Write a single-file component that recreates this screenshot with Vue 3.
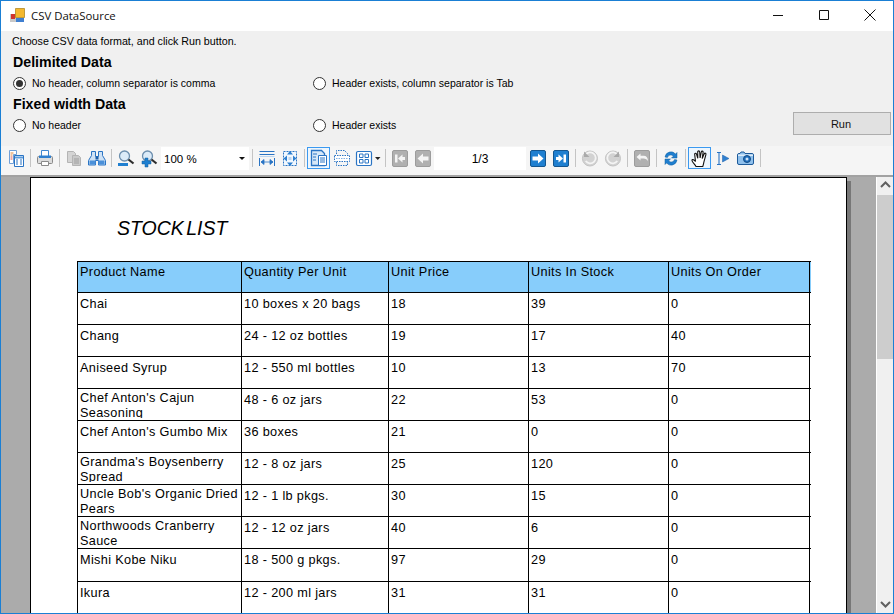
<script setup>
const B = '#2a74c4'
const LB = '#dcebf8'
const G = '#b4b4b4'

const square = 'M3 1.500h12A1.500 1.500 0 0 1 16.500 3v13a1.500 1.500 0 0 1-1.500 1.500H3A1.500 1.500 0 0 1 1.500 16V3A1.500 1.500 0 0 1 3 1.500z'
const grayBtn = (inner) => [{ d: square, fill: '#b0b0b0', stroke: '#9c9c9c' }, ...inner]
const blueBtn = (inner) => [{ d: square, fill: '#1f7fd0', stroke: '#14568f' }, ...inner]
const W = '#f4f4f4'

const tools = [
  { k: 'b', s: [
    { d: 'M2.500 1.500h7v4h-3v9h-4z', fill: '#fff', stroke: '#6f9fd8' },
    { d: 'M3.500 4h3M3.500 6h2', stroke: '#e0843a' },
    { d: 'M3.500 8h2M3.500 10h2', stroke: '#d9534f' },
    { d: 'M7.500 6.500h9v11h-9z', fill: '#fff', stroke: B },
    { d: 'M8 7.500h8v2H8z', fill: '#5b9bdc' },
    { d: 'M9 11h2M9 13h2M9 15h2M13 11h2M13 13h2M13 15h2', stroke: B }
  ] },
  { k: 's' },
  { k: 'b', s: [
    { d: 'M5.500 1.500h7v6h-7z', fill: '#fff', stroke: '#3f87d0' },
    { d: 'M2.500 7.500h13a1 1 0 0 1 1 1v5a1 1 0 0 1-1 1h-13a1 1 0 0 1-1-1v-5a1 1 0 0 1 1-1z', fill: '#dcdcdc', stroke: '#8a8a8a' },
    { d: 'M3 6.500h12v2.500H3z', fill: '#2f80d0' },
    { d: 'M5.500 12.500h7v4h-7z', fill: '#fff', stroke: '#8a8a8a' }
  ] },
  { k: 's' },
  { k: 'b', s: [
    { d: 'M2.500 2.500h6l2 2v9h-8z', fill: '#d4d4d4', stroke: G },
    { d: 'M7.500 6.500h6l2 2v8h-8z', fill: '#c9c9c9', stroke: G },
    { d: 'M9 10h5M9 12h5M9 14h5', stroke: '#9f9f9f' }
  ] },
  { k: 'b', s: [
    { d: 'M3.500 2.500h4v5h3v-5h4v4l3 5v4.500h-7v-4.500h-3v4.500h-7v-4.500l3-5z', fill: '#cfe2f5', stroke: B },
    { d: 'M1.500 11.500h6v4h-6zM10.500 11.500h6v4h-6z', fill: '#4a90d9' },
    { d: 'M7.500 7.500h3v3h-3z', fill: '#1d5fa8' }
  ] },
  { k: 's' },
  { k: 'b', s: [
    { d: 'M7.500 2a5 5 0 1 1 0 10a5 5 0 1 1 0-10z', fill: LB, stroke: '#6d8fae', sw: 1.3 },
    { d: 'M11.500 10.500l5 4', stroke: '#2d2d2d', sw: 2.200 },
    { d: 'M1 14h10v3H1z', fill: '#1f7fd0' }
  ] },
  { k: 'b', s: [
    { d: 'M7.500 2a5 5 0 1 1 0 10a5 5 0 1 1 0-10z', fill: LB, stroke: '#6d8fae', sw: 1.3 },
    { d: 'M11.500 10.500l5 4', stroke: '#2d2d2d', sw: 2.200 },
    { d: 'M5 9h3v3h3v3H8v3H5v-3H2v-3h3z', fill: '#1f7fd0', stroke: '#15609f', sw: 0.5 }
  ] },
  { k: 'combo' },
  { k: 's' },
  { k: 'b', s: [
    { d: 'M1.500 2.500h15M1.500 5.500h15', stroke: B },
    { d: 'M1.500 7h15v1h-15z', fill: '#bcd6f0' },
    { d: 'M1.500 9v8M16.500 9v8', stroke: B },
    { d: 'M3 13h12M3 13l3-2.500v5zM15 13l-3-2.500v5z', fill: B, stroke: B, sw: 0.8 }
  ] },
  { k: 'b', s: [
    { d: 'M2.500 2.500h13v14h-13z', fill: '#f2f8fe', stroke: B, dash: '2 1' },
    { d: 'M9 2l3 3.500H6zM9 17l3-3.500H6zM2.500 9.500l3.500-3v6zM15.500 9.500l-3.500-3v6z', fill: '#2f80d0' },
    { d: 'M7.500 8h3v3h-3z', fill: '#bcd6f0' }
  ] },
  { k: 's' },
  { k: 'b', on: true, s: [
    { d: 'M1.500 1.500h10l3 3v12h-13z', fill: '#d7e8f8', stroke: B, sw: 1.3 },
    { d: 'M8.500 6.500h8v10h-8z', fill: '#fff', stroke: B },
    { d: 'M10 9h5M10 11h5M10 13h5', stroke: B },
    { d: 'M3 5h4M3 8h3M3 11h3', stroke: B }
  ] },
  { k: 'b', s: [
    { d: 'M3.500 5V1.500h8l3 3V6', stroke: B, dash: '1.500 1' },
    { d: 'M1.500 6.500h15v6h-15z', fill: '#fff', stroke: B, dash: '1.500 1' },
    { d: 'M3 9.500h12', stroke: '#7fb0e4', dash: '1.500 1' },
    { d: 'M3.500 13v3.500h11V13', stroke: B, dash: '1.500 1' }
  ] },
  { k: 'b', wide: true, s: [
    { d: 'M3 2.500h12a1.500 1.500 0 0 1 1.500 1.500v11a1.500 1.500 0 0 1-1.500 1.500H3A1.500 1.500 0 0 1 1.500 15V4A1.500 1.500 0 0 1 3 2.500z', fill: '#fff', stroke: B, sw: 1.2 },
    { d: 'M4.500 5h3.500v3.500H4.500zM10 5h3.500v3.500H10zM4.500 10.500h3.500v3.500H4.500zM10 10.500h3.500v3.500H10z', fill: '#fff', stroke: B },
    { d: 'M20 8h5.500l-2.750 3z', fill: '#222' }
  ] },
  { k: 's' },
  { k: 'b', s: grayBtn([{ d: 'M4 5.500h2.500v8H4z', fill: W }, { d: 'M7 9.500l4.500-4v2.500H14v3h-2.500v2.500z', fill: W }]) },
  { k: 'b', s: grayBtn([{ d: 'M3.500 9.500l5.500-5v3h5.500v4H9v3z', fill: W }]) },
  { k: 'page' },
  { k: 'b', s: blueBtn([{ d: 'M14.500 9.500l-5.500-5v3H3.500v4H9v3z', fill: '#fff' }]) },
  { k: 'b', s: blueBtn([{ d: 'M11.500 5.500H14v8h-2.500z', fill: '#fff' }, { d: 'M11 9.500l-4.500-4v2.500H4v3h2.500v2.500z', fill: '#fff' }]) },
  { k: 's' },
  { k: 'b', s: [
    { d: 'M9 2a7.500 7.500 0 1 1-.1 15a7.500 7.500 0 1 1 .1-15z', fill: '#d2d2d2', stroke: '#c2c2c2' },
    { d: 'M4.500 6a5.500 5.500 0 1 1 .2 6', stroke: '#f4f4f4', sw: 1.800 },
    { d: 'M3 2.500v5.500h5.500z', fill: '#a9a9a9' }
  ] },
  { k: 'b', s: [
    { d: 'M9 2a7.500 7.500 0 1 1-.1 15a7.500 7.500 0 1 1 .1-15z', fill: '#d2d2d2', stroke: '#c2c2c2' },
    { d: 'M13.500 6a5.500 5.500 0 1 0-.2 6', stroke: '#f4f4f4', sw: 1.800 },
    { d: 'M15 2.500v5.500H9.500z', fill: '#a9a9a9' }
  ] },
  { k: 's' },
  { k: 'b', s: grayBtn([
    { d: 'M3.500 8l4-3.500v2.200h3c3 0 4.500 2 4.500 5.500c-1-2-2.500-2.800-4.500-2.800h-3v2.100z', fill: W }
  ]) },
  { k: 's' },
  { k: 'b', s: [
    { d: 'M3 8a6 6 0 0 1 10.500-3l1.500-1.500v5.500h-5.500l1.800-1.800a3.400 3.400 0 0 0-5.900 1.300z', fill: '#1f7fd0', stroke: '#14609f', sw: 0.5 },
    { d: 'M15 11a6 6 0 0 1-10.500 3L3 15.500V10h5.500l-1.800 1.800a3.400 3.400 0 0 0 5.900-1.300z', fill: '#1f7fd0', stroke: '#14609f', sw: 0.5 }
  ] },
  { k: 's' },
  { k: 'b', on: true, s: [
    { d: 'M5 17.500c-1-2-4.500-5-4-6.500c.500-1.200 2.300-.2 3.500 1.500L3.700 5.500c-.2-1.500 1.500-1.700 1.900-.2l1.200 4L6.700 3c0-1.500 1.900-1.500 2 0l.4 6l1.200-6c.3-1.400 2-1.100 1.800.3l-.9 6.200l2-4.600c.6-1.300 2.200-.7 1.700.7l-1.900 7c-.4 1.500-.6 3-1.200 4.800z', fill: '#fff', stroke: '#111', sw: 1.1 }
  ] },
  { k: 'b', s: [
    { d: 'M3 3.500h4M3 15.500h4M5 3.500v12', stroke: B, sw: 1.100 },
    { d: 'M8.500 6l6.500 3.500l-6.500 3.500z', fill: '#2f80d0', stroke: '#1d5fa8', sw: 0.5 }
  ] },
  { k: 'b', s: [
    { d: 'M2 4.500h1l1-1.500h3l1 1.500H15a1.500 1.500 0 0 1 1.500 1.500v8a1.500 1.500 0 0 1-1.500 1.500H2A1.500 1.500 0 0 1 .5 14V6A1.500 1.500 0 0 1 2 4.500z', fill: '#8fc0ec', stroke: '#1d5a9a' },
    { d: 'M1 5.500h15v1.500H1z', fill: '#dcebf8' },
    { d: 'M10 6.500a3.500 3.500 0 1 1 0 7a3.500 3.500 0 1 1 0-7z', fill: '#1f6fbe', stroke: '#134b85' },
    { d: 'M10 8.500a1.500 1.500 0 1 1 0 3a1.500 1.500 0 1 1 0-3z', fill: '#cfe3f7' }
  ] },
  { k: 's' }
]

const rows = [
  { c: ['Product Name', 'Quantity Per Unit', 'Unit Price', 'Units In Stock', 'Units On Order'], head: true },
  { c: ['Chai', '10 boxes x 20 bags', '18', '39', '0'] },
  { c: ['Chang', '24 - 12 oz bottles', '19', '17', '40'] },
  { c: ['Aniseed Syrup', '12 - 550 ml bottles', '10', '13', '70'] },
  { c: ["Chef Anton's Cajun Seasoning", '48 - 6 oz jars', '22', '53', '0'], two: true },
  { c: ["Chef Anton's Gumbo Mix", '36 boxes', '21', '0', '0'] },
  { c: ["Grandma's Boysenberry Spread", '12 - 8 oz jars', '25', '120', '0'], two: true },
  { c: ["Uncle Bob's Organic Dried Pears", '12 - 1 lb pkgs.', '30', '15', '0'], two: true },
  { c: ['Northwoods Cranberry Sauce', '12 - 12 oz jars', '40', '6', '0'], two: true },
  { c: ['Mishi Kobe Niku', '18 - 500 g pkgs.', '97', '29', '0'], tall: true },
  { c: ['Ikura', '12 - 200 ml jars', '31', '31', '0'] }
]
</script>

<template>
  <div class="window">
    <header class="titlebar">
      <svg class="appicon" width="15" height="15" viewBox="0 0 15 15">
        <path d="M0 6h6v8H0z" fill="#c8c8c8" />
        <path d="M1 6h4v5H1z" fill="#d0342c" />
        <path d="M5.500 .5h9v9h-9z" fill="#f4b82e" stroke="#a87c12" stroke-width=".7" />
        <path d="M6 10h8v4H6z" fill="#3f7fd0" />
      </svg>
      <span class="title">CSV DataSource</span>
      <div class="wincontrols">
        <span class="winbtn">
          <svg width="12" height="12" viewBox="0 0 12 12"><path d="M1 6.500h10" stroke="#111" fill="none" /></svg>
        </span>
        <span class="winbtn">
          <svg width="12" height="12" viewBox="0 0 12 12"><path d="M1.500 1.500h9v9h-9z" stroke="#111" fill="none" /></svg>
        </span>
        <span class="winbtn">
          <svg width="12" height="12" viewBox="0 0 12 12"><path d="M.5 .5l11 11M11.500 .5l-11 11" stroke="#111" fill="none" /></svg>
        </span>
      </div>
    </header>

    <section class="form">
      <p class="hint">Choose CSV data format, and click Run button.</p>
      <h2 class="group">Delimited Data</h2>
      <div class="radios">
        <label class="radio"><span class="dot on"></span>No header, column separator is comma</label>
        <label class="radio"><span class="dot"></span>Header exists, column separator is Tab</label>
      </div>
      <div class="lastgroup">
        <div class="lastleft">
          <h2 class="group second">Fixed width Data</h2>
          <div class="radios">
            <label class="radio"><span class="dot"></span>No header</label>
            <label class="radio"><span class="dot"></span>Header exists</label>
          </div>
        </div>
        <button class="run">Run</button>
      </div>
    </section>

    <nav class="toolbar">
      <template v-for="(t, i) in tools" :key="i">
        <span v-if="t.k === 's'" class="sep"></span>
        <span v-else-if="t.k === 'b'" class="tool" :class="{ on: t.on, wide: t.wide }">
          <svg :width="t.wide ? 26 : 18" height="19" :viewBox="t.wide ? '0 0 26 19' : '0 0 18 19'">
            <path
              v-for="(p, j) in t.s"
              :key="j"
              :d="p.d"
              :fill="p.fill || 'none'"
              :stroke="p.stroke || 'none'"
              :stroke-width="p.sw || 1"
              :stroke-dasharray="p.dash"
            />
          </svg>
        </span>
        <span v-else-if="t.k === 'combo'" class="combo">
          <span>100 %</span>
          <svg width="6" height="3" viewBox="0 0 6 3"><path d="M0 0h6L3 3z" fill="#111" /></svg>
        </span>
        <span v-else class="pagebox">1/3</span>
      </template>
    </nav>

    <main class="viewer">
      <div class="page">
        <h1 class="doctitle">STOCK LIST</h1>
        <div class="table">
          <div v-for="(r, i) in rows" :key="i" class="row" :class="{ head: r.head, two: r.two, tall: r.tall }">
            <div v-for="(c, j) in r.c" :key="j" class="cell"><span class="clip">{{ c }}</span></div>
          </div>
        </div>
      </div>
      <div class="scrollbar">
        <svg class="arrow" width="11" height="7" viewBox="0 0 11 7"><path d="M1 6l4.500-4.500L10 6" fill="none" stroke="#606060" stroke-width="2" /></svg>
        <div class="track"><div class="thumb"></div></div>
        <svg class="arrow" width="11" height="7" viewBox="0 0 11 7"><path d="M1 1l4.500 4.500L10 1" fill="none" stroke="#606060" stroke-width="2" /></svg>
      </div>
    </main>
  </div>
</template>

<style scoped>
.window {
  width: 894px;
  height: 614px;
  box-sizing: border-box;
  border: 1px solid #1a7fd4;
  display: flex;
  flex-direction: column;
  overflow: hidden;
  background: #f0f0f0;
  font-family: "Liberation Sans", Arial, sans-serif;
  color: #000;
}
.titlebar {
  height: 30px;
  flex: none;
  background: #fff;
  display: flex;
  align-items: center;
  padding-left: 9px;
}
.appicon { margin-right: 6px; margin-bottom: 1px; }
.title {
  font-family: "Open Sans", sans-serif;
  font-size: 11.4px;
  color: #111;
  margin-bottom: 1px;
}
.wincontrols { margin-left: auto; display: flex; }
.winbtn {
  width: 46px;
  height: 28px;
  margin-bottom: 2px;
  display: flex;
  align-items: center;
  justify-content: center;
}
.form {
  flex: none;
  height: 115px;
  box-sizing: border-box;
  padding: 3px 2px 0 11px;
}
.hint { margin: 0; height: 14px; line-height: 14px; font-size: 10.7px; }
.group {
  margin: 6px 0 0 1px;
  font-size: 14.2px;
  line-height: 17px;
  font-weight: bold;
}
.group.second { margin-top: 0; }
.radios { display: flex; height: 20px; align-items: center; margin-top: 2px; }
.radio {
  width: 300px;
  display: flex;
  align-items: center;
  gap: 6px;
  margin-left: 1px;
  margin-right: -1px;
  font-size: 10.5px;
  line-height: 14px;
}
.dot {
  width: 13px;
  height: 13px;
  box-sizing: border-box;
  border: 1px solid #333;
  border-radius: 50%;
  background: #fff;
  display: flex;
  align-items: center;
  justify-content: center;
}
.dot.on::after {
  content: "";
  width: 7px;
  height: 7px;
  border-radius: 50%;
  background: #333;
}
.lastgroup {
  display: flex;
  align-items: flex-end;
  justify-content: space-between;
  margin-top: 3px;
}
.lastleft { width: 600px; }
.run {
  width: 98px;
  height: 23px;
  box-sizing: border-box;
  background: #e1e1e1;
  border: 1px solid #adadad;
  font-family: "Liberation Sans", Arial, sans-serif;
  font-size: 11px;
  padding: 0 2px 0 0;
  color: #111;
}
.toolbar {
  flex: none;
  height: 29px;
  background: #f5f5f5;
  display: flex;
  align-items: flex-start;
  padding: 1px 0 0 3px;
  box-sizing: border-box;
}
.tool {
  flex: none;
  width: 23px;
  height: 22px;
  box-sizing: border-box;
  display: flex;
  align-items: center;
  justify-content: center;
  border: 1px solid transparent;
}
.tool.wide { width: 29px; }
.tool.on { border-color: #3b99f0; background: #eef6fd; }
.sep {
  flex: none;
  width: 6px;
  height: 22px;
  display: flex;
  justify-content: center;
}
.sep::before {
  content: "";
  width: 1px;
  height: 18px;
  margin-top: 2px;
  background: #c4c4c4;
}
.combo {
  flex: none;
  width: 88px;
  height: 23px;
  margin-left: 1px;
  box-sizing: border-box;
  background: #fff;
  display: flex;
  align-items: center;
  justify-content: space-between;
  padding: 0 4px 0 3px;
  font-size: 11.5px;
}
.pagebox {
  flex: none;
  width: 92px;
  height: 23px;
  background: #fff;
  display: flex;
  align-items: center;
  justify-content: center;
  font-size: 12px;
}
.viewer {
  flex: 1;
  min-height: 0;
  display: flex;
  background: #ababab;
  border-top: 2px solid #a2a2a2;
  overflow: hidden;
  padding-left: 29px;
  position: relative;
}
.page {
  flex: none;
  width: 817px;
  height: 700px;
  box-sizing: border-box;
  background: #fff;
  border: 1px solid #000;
  box-shadow: 4px 4px 0 #777;
}
.doctitle {
  margin: 38px 0 0 86px;
  height: 24px;
  font-size: 19.5px;
  line-height: 24px;
  font-weight: normal;
  font-style: italic;
  word-spacing: -3px;
}
.table {
  margin: 21px 0 0 46px;
  width: 733px;
  border-top: 1px solid #000;
  border-left: 1px solid #000;
  font-size: 12.7px;
}
.row {
  display: grid;
  grid-template-columns: 164px 147px 140px 140px 141px;
  height: 32px;
  box-sizing: border-box;
  border-bottom: 1px solid #000;
}
.row.head { background: #87cdfb; height: 31px; }
.row.tall { height: 33px; }
.cell {
  border-right: 1px solid #000;
  padding: 4px 1px 0 2px;
  overflow: hidden;
  line-height: 15px;
  letter-spacing: .35px;
}
.row.head .cell { padding-top: 3px; }
.clip { display: block; }
.row.two .cell:first-child { padding-top: 2px; }
.row.two .cell:first-child .clip { height: 27px; overflow: hidden; }
.scrollbar {
  position: absolute;
  right: 0;
  top: -2px;
  bottom: 0;
  width: 16px;
  background: #f0f0f0;
  border-left: 1px solid #fff;
  display: flex;
  flex-direction: column;
  align-items: center;
}
.arrow { flex: none; margin: 6px 0 5px; }
.track { flex: 1; width: 100%; }
.thumb { height: 164px; margin-top: 2px; background: #cdcdcd; }
</style>

<style>
body { margin: 0; }
</style>
